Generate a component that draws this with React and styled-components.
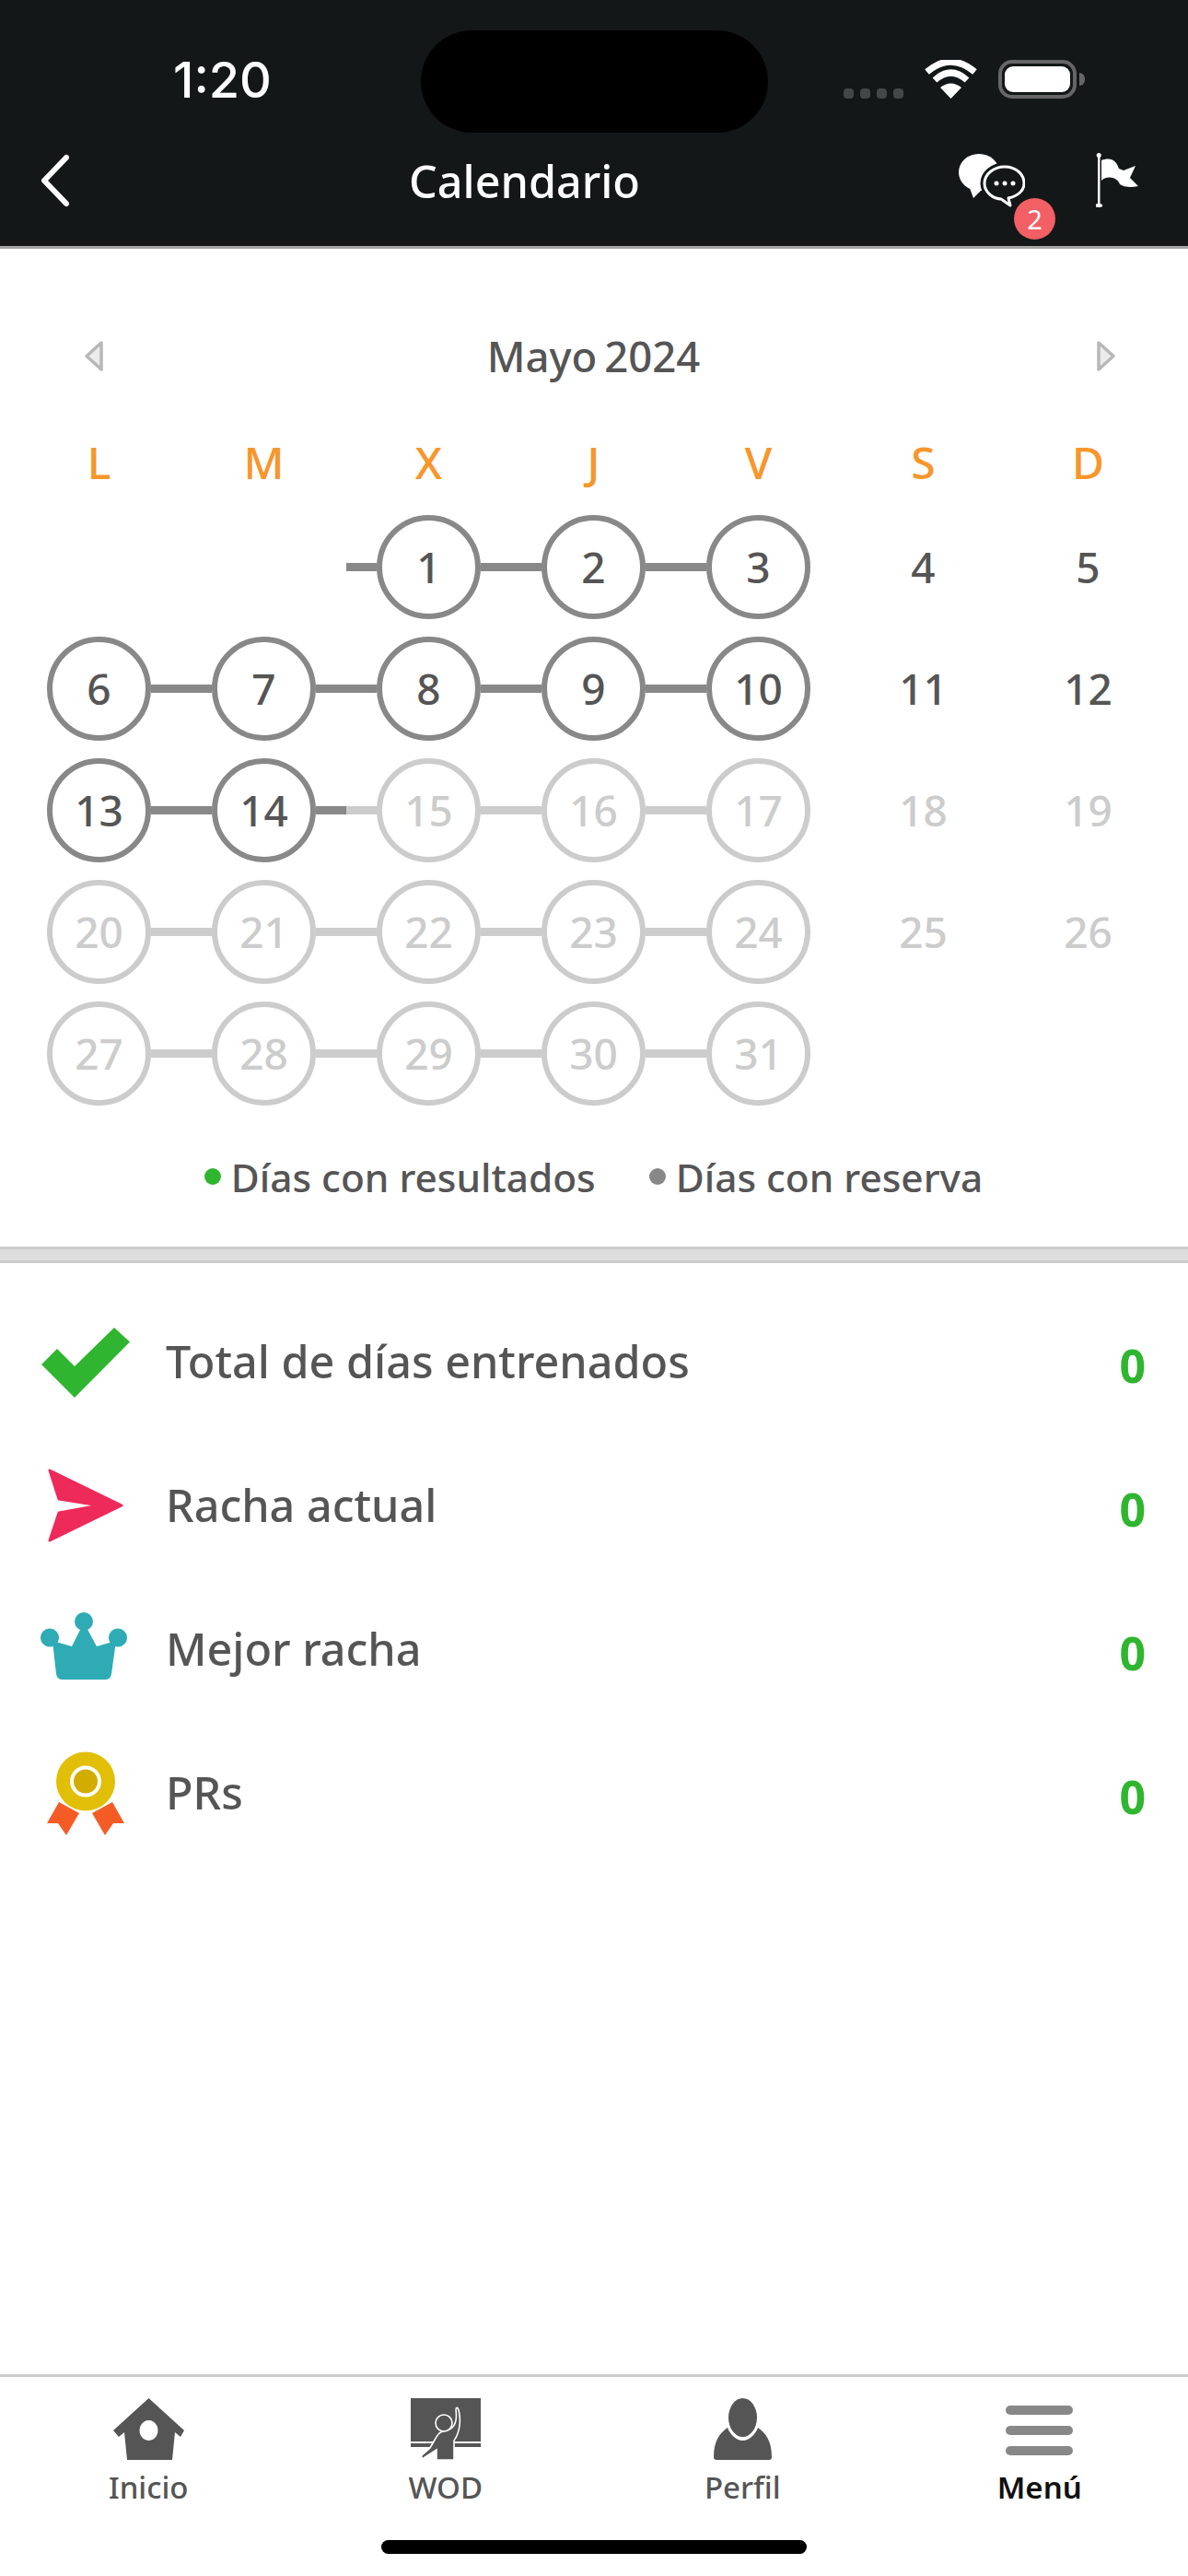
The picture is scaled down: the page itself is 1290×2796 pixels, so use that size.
import React from 'react';
import styled, { createGlobalStyle } from 'styled-components';

const GlobalStyle = createGlobalStyle`
  html, body {
    margin: 0;
    padding: 0;
    background: #fff;
    font-family: "Noto Sans", "Open Sans", sans-serif;
  }
`;

const Page = styled.div`
  position: relative;
  width: 1290px;
  height: 2796px;
  display: flex;
  flex-direction: column;
  overflow: hidden;
  background: #fff;
`;

const Header = styled.header`
  height: 267px;
  background: #131718;
  border-bottom: 3px solid #a3a4a4;
  color: #fff;
`;

const StatusBar = styled.div`
  height: 150px;
  box-sizing: border-box;
  padding-top: 33px;
  display: grid;
  grid-template-columns: 457px 377px 1fr;
`;

const Time = styled.div`
  padding-left: 188px;
  font-family: Inter, "Liberation Sans", sans-serif;
  font-size: 54px;
  font-weight: 500;
  line-height: 108px;
`;

const Island = styled.div`
  height: 111px;
  border-radius: 56px;
  background: #000;
`;

const StatusIcons = styled.div`
  height: 42px;
  margin-top: 32px;
  padding-left: 82px;
  display: flex;
  align-items: flex-end;
`;

const SignalDots = styled.div`
  display: flex;
  gap: 7px;
  width: 65px;
  margin-right: 23px;
`;

const SignalDot = styled.span`
  width: 11px;
  height: 11px;
  border-radius: 4px;
  background: #444748;
`;

const Battery = styled.div`
  width: 85px;
  height: 42px;
  box-sizing: border-box;
  margin-left: 23px;
  padding: 3px;
  border: 4px solid #666;
  border-radius: 15px;
`;

const BatteryFill = styled.div`
  height: 100%;
  border-radius: 9px;
  background: #fff;
`;

const BatteryNub = styled.div`
  width: 6px;
  height: 14px;
  margin: 0 0 14px 3px;
  border-radius: 0 7px 7px 0;
  background: #666;
`;

const NavRow = styled.div`
  height: 117px;
  box-sizing: border-box;
  padding-bottom: 26px;
  display: grid;
  grid-template-columns: 444px 250px 1fr;
  align-items: center;
`;

const BackButton = styled.div`
  padding-left: 43px;
  line-height: 0;
`;

const Title = styled.h1`
  margin: 0;
  text-align: center;
  white-space: nowrap;
  font-size: 48.5px;
  font-weight: 500;
  line-height: 90px;
`;

const NavActions = styled.div`
  padding: 0 0 0 347px;
  display: flex;
  align-items: center;
  gap: 77px;
`;

const ChatButton = styled.div`
  position: relative;
  width: 72px;
  height: 58px;
  line-height: 0;
`;

const Badge = styled.span`
  position: absolute;
  left: 60px;
  top: 48px;
  width: 45px;
  height: 45px;
  border-radius: 50%;
  background: #f25f64;
  color: #fff;
  font-size: 29px;
  line-height: 45px;
  text-align: center;
`;

const FlagButton = styled.div`
  width: 47px;
  height: 59px;
  line-height: 0;
`;

const CalendarSection = styled.section`
  padding: 86px 19px 44px 18px;
`;

const MonthRow = styled.div`
  height: 60px;
  display: grid;
  grid-template-columns: 1fr auto 1fr;
  align-items: center;
`;

const ArrowSlot = styled.div`
  display: flex;
  justify-content: ${(p) => (p.$right ? 'flex-end' : 'flex-start')};
  padding: ${(p) => (p.$right ? '0 60px 0 0' : '0 0 0 74px')};
  line-height: 0;
`;

const MonthTitle = styled.h2`
  margin: 0;
  color: #555;
  font-size: 45.5px;
  font-weight: 500;
  word-spacing: -4px;
  line-height: 60px;
`;

const WeekRow = styled.div`
  margin-top: 56px;
  display: grid;
  grid-template-columns: repeat(7, 179px);
`;

const WeekDay = styled.div`
  color: #f7962b;
  font-size: 48px;
  font-weight: 500;
  line-height: 60px;
  text-align: center;
`;

const DaysGrid = styled.div`
  margin-top: 17px;
  display: grid;
  grid-template-columns: repeat(7, 179px);
  grid-auto-rows: 132px;
`;

const DayCell = styled.div`
  display: flex;
  align-items: center;
`;

const Link = styled.span`
  flex: 1;
  height: 9px;
  background: ${(p) => (p.$hidden ? 'transparent' : p.$past ? '#888' : '#ccc')};
`;

const DayCircle = styled.div`
  width: 113px;
  height: 113px;
  box-sizing: border-box;
  flex: none;
  display: flex;
  align-items: center;
  justify-content: center;
  border-radius: 50%;
  border: ${(p) => (p.$plain ? 'none' : `6px solid ${p.$past ? '#888' : '#ccc'}`)};
  color: ${(p) => (p.$past ? '#555' : '#ccc')};
  font-size: 46px;
  font-weight: 500;
`;

const Legend = styled.div`
  margin-top: 38px;
  height: 60px;
  display: flex;
  align-items: center;
  justify-content: center;
  gap: 58px;
`;

const LegendItem = styled.div`
  display: flex;
  align-items: center;
  gap: 11px;
  color: #555;
  font-size: 42.4px;
  font-weight: 500;
`;

const LegendDot = styled.span`
  width: 18px;
  height: 18px;
  border-radius: 50%;
  background: ${(p) => p.$color};
`;

const Divider = styled.div`
  height: 12px;
  margin-top: 2px;
  background: #ddd;
  border-top: 3px solid #ccc;
  border-bottom: 3px solid #ccc;
`;

const StatsList = styled.section`
  flex: 1;
  padding: 28px 46px 0 43px;
`;

const StatRow = styled.div`
  height: 156px;
  display: grid;
  grid-template-columns: 137px 1fr auto;
  align-items: center;
`;

const StatIcon = styled.div`
  width: 100px;
  height: 100px;
  margin-top: 8px;
  line-height: 0;
`;

const StatLabel = styled.span`
  color: #555;
  font-size: 48.5px;
  font-weight: 500;
`;

const StatValue = styled.span`
  padding-top: 9px;
  color: #2fb52f;
  font-size: 50px;
  font-weight: 700;
`;

const TabBar = styled.nav`
  height: 219px;
  box-sizing: border-box;
  border-top: 3px solid #ccc;
  display: grid;
  grid-template-columns: repeat(4, 1fr);
  align-items: start;
`;

const Tab = styled.div`
  padding-top: 21px;
  display: flex;
  flex-direction: column;
  align-items: center;
`;

const TabIcon = styled.div`
  height: 69px;
  display: flex;
  align-items: flex-end;
  line-height: 0;
`;

const TabLabel = styled.span`
  margin-top: 8px;
  color: ${(p) => (p.$active ? '#111' : '#555')};
  font-size: 33px;
  font-weight: ${(p) => (p.$active ? 600 : 500)};
  line-height: 44px;
`;

const MenuBars = styled.div`
  width: 73px;
  height: 54px;
  margin-bottom: 5px;
  display: flex;
  flex-direction: column;
  justify-content: space-between;
`;

const MenuBar = styled.span`
  height: 10px;
  border-radius: 5px;
  background: #888;
`;

const HomeIndicator = styled.div`
  position: absolute;
  left: 414px;
  top: 2757px;
  width: 462px;
  height: 15px;
  border-radius: 8px;
  background: #000;
`;

const ArrowIcon = ({ right }) => (
  <svg width="21" height="33" viewBox="0 0 21 33">
    <path
      d={right ? 'M3 2 L19 16.5 L3 31 Z' : 'M18 2 L2 16.5 L18 31 Z'}
      fill="#ececec"
      stroke="#b8b8b8"
      strokeWidth="3.5"
      strokeLinejoin="round"
    />
  </svg>
);

const CheckIcon = () => (
  <svg width="100" height="100" viewBox="0 0 100 100">
    <path d="M2 50 L19 33 L38 52 L81 10 L98 25.5 L38 86 Z" fill="#2fb52f" />
  </svg>
);

const SendIcon = () => (
  <svg width="100" height="100" viewBox="0 0 100 100">
    <path
      d="M11 9 L89 47 L11 85 L21 55 L65 47 L21 40 Z"
      fill="#ee2a5b"
      stroke="#ee2a5b"
      strokeWidth="3"
      strokeLinejoin="round"
    />
  </svg>
);

const CrownIcon = () => (
  <svg width="100" height="100" viewBox="0 0 100 100" fill="#2eabb5">
    <circle cx="48" cy="17" r="10" />
    <circle cx="11" cy="34.5" r="10" />
    <circle cx="85" cy="34.5" r="10" />
    <path d="M14 38 L35 44 L48 18 L62 44 L83 38 L78 74 Q77 80 71 80 H25 Q19 80 18 74 Z" />
  </svg>
);

const MedalIcon = () => (
  <svg width="100" height="100" viewBox="0 0 100 100">
    <path d="M21 57 L43 69 L29 93 L20 80 L8 80 Z" fill="#f55c25" />
    <path d="M79 57 L57 69 L71 93 L80 80 L92 80 Z" fill="#f55c25" />
    <circle cx="50" cy="34.5" r="32" fill="#e2bf07" />
    <circle cx="50" cy="34.5" r="15" fill="#d2ad00" stroke="#fff" strokeWidth="4" />
  </svg>
);

const HomeIcon = () => (
  <svg width="77" height="67" viewBox="0 0 77 67">
    <path
      fillRule="evenodd"
      fill="#555"
      d="M38.5 0 L77 35 L73 42 L67 37 L64 67 H15 L12 37 L6 42 L0 35 Z M38.5 24 a10 11 0 1 0 0.01 0 Z"
    />
  </svg>
);

const WodIcon = () => (
  <svg width="76" height="67" viewBox="0 0 76 67">
    <rect width="76" height="47" fill="#555" />
    <rect y="49" width="76" height="4" fill="#555" />
    <path
      d="M47 67 V46 C53 38 55 24 52 13 C51 9 49 10 49 13 C50 20 49 28 45 32 C41 36 35 35 31 38 C27 42 24 50 20 55 L12 62 C11 65 13 66 14 65 L28 56 V67 Z"
      fill="#555"
      stroke="#fff"
      strokeWidth="1.6"
    />
    <circle cx="36" cy="27" r="9" fill="#555" stroke="#fff" strokeWidth="1.6" />
  </svg>
);

const ProfileIcon = () => (
  <svg width="63" height="67" viewBox="0 0 63 67" fill="#555">
    <ellipse cx="31.5" cy="21" rx="15.5" ry="21" />
    <path d="M0 64 C0 47 6 38 15 32 C18 40 25 46 31.5 46 C38 46 45 40 48 32 C57 38 63 47 63 64 Q63 67 60 67 H3 Q0 67 0 64 Z" />
  </svg>
);

const BackIcon = () => (
  <svg width="33" height="58" viewBox="0 0 33 58">
    <path d="M29 4 L5 29 L29 54" fill="none" stroke="#fff" strokeWidth="6" strokeLinecap="round" strokeLinejoin="round" />
  </svg>
);

const WifiIcon = () => (
  <svg width="57" height="42" viewBox="0 0 57 42">
    <path d="M28.5 42 L17 30 Q28.5 21 40 30 Z" fill="#fff" />
    <path d="M11 22 Q28.5 6 46 22" fill="none" stroke="#fff" strokeWidth="7" />
    <path d="M2.5 13 Q28.5 -9 54.5 13" fill="none" stroke="#fff" strokeWidth="7" />
  </svg>
);

const ChatIcon = () => (
  <svg width="72" height="58" viewBox="0 0 72 58">
    <ellipse cx="22" cy="20" rx="22" ry="20" fill="#fff" />
    <path d="M10 32 L16 48 L26 38 Z" fill="#fff" />
    <path
      d="M50 14 C38 14 28 22 28 32 C28 42 38 49 46 49 L56 56 L54 48 C64 46 71 40 71 32 C71 22 62 14 50 14 Z"
      fill="#131718"
      stroke="#131718"
      strokeWidth="9"
    />
    <path
      d="M50 14 C38 14 28 22 28 32 C28 42 38 49 46 49 L56 56 L54 48 C64 46 71 40 71 32 C71 22 62 14 50 14 Z"
      fill="#131718"
      stroke="#fff"
      strokeWidth="3"
      strokeLinejoin="round"
    />
    <circle cx="41" cy="32" r="2.5" fill="#fff" />
    <circle cx="50" cy="32" r="2.5" fill="#fff" />
    <circle cx="59" cy="32" r="2.5" fill="#fff" />
  </svg>
);

const FlagIcon = () => (
  <svg width="47" height="59" viewBox="0 0 47 59" fill="#fff">
    <rect x="2" y="1" width="2.5" height="57" />
    <circle cx="3.2" cy="2.5" r="2.5" />
    <ellipse cx="3.2" cy="57" rx="4" ry="2" />
    <path d="M6 8 C16 4 22 8 25 17 L30 19 L43 14 L37 27 L46 36 C38 38 30 37 26 34 C24 28 14 23 6 30 Z" />
  </svg>
);

const WEEK_DAYS = ['L', 'M', 'X', 'J', 'V', 'S', 'D'];

// null = empty cell, dias 1 a 14 ya pasados
const CALENDAR = [
  null, null, 1, 2, 3, 4, 5,
  6, 7, 8, 9, 10, 11, 12,
  13, 14, 15, 16, 17, 18, 19,
  20, 21, 22, 23, 24, 25, 26,
  27, 28, 29, 30, 31, null, null,
];

const STATS = [
  { label: 'Total de días entrenados', icon: <CheckIcon /> },
  { label: 'Racha actual', icon: <SendIcon /> },
  { label: 'Mejor racha', icon: <CrownIcon /> },
  { label: 'PRs', icon: <MedalIcon /> },
];

const Day = ({ day, index }) => {
  if (day === null) return <DayCell />;
  const column = index % 7;
  const past = day <= 14;
  const weekend = column > 4;
  return (
    <DayCell>
      <Link $past={past} $hidden={weekend || column === 0} />
      <DayCircle $past={past} $plain={weekend}>{day}</DayCircle>
      <Link $past={past} $hidden={weekend || column === 4} />
    </DayCell>
  );
};

const App = () => {
  return (
    <Page>
      <GlobalStyle />
      <Header>
        <StatusBar>
          <Time>1:20</Time>
          <Island />
          <StatusIcons>
            <SignalDots>
              <SignalDot />
              <SignalDot />
              <SignalDot />
              <SignalDot />
            </SignalDots>
            <WifiIcon />
            <Battery>
              <BatteryFill />
            </Battery>
            <BatteryNub />
          </StatusIcons>
        </StatusBar>
        <NavRow>
          <BackButton>
            <BackIcon />
          </BackButton>
          <Title>Calendario</Title>
          <NavActions>
            <ChatButton>
              <ChatIcon />
              <Badge>2</Badge>
            </ChatButton>
            <FlagButton>
              <FlagIcon />
            </FlagButton>
          </NavActions>
        </NavRow>
      </Header>

      <CalendarSection>
        <MonthRow>
          <ArrowSlot>
            <ArrowIcon />
          </ArrowSlot>
          <MonthTitle>Mayo 2024</MonthTitle>
          <ArrowSlot $right>
            <ArrowIcon right />
          </ArrowSlot>
        </MonthRow>
        <WeekRow>
          {WEEK_DAYS.map((d) => (
            <WeekDay key={d}>{d}</WeekDay>
          ))}
        </WeekRow>
        <DaysGrid>
          {CALENDAR.map((day, i) => (
            <Day key={i} day={day} index={i} />
          ))}
        </DaysGrid>
        <Legend>
          <LegendItem>
            <LegendDot $color="#2fb52f" />
            Días con resultados
          </LegendItem>
          <LegendItem>
            <LegendDot $color="#888" />
            Días con reserva
          </LegendItem>
        </Legend>
      </CalendarSection>
      <Divider />

      <StatsList>
        {STATS.map((s) => (
          <StatRow key={s.label}>
            <StatIcon>{s.icon}</StatIcon>
            <StatLabel>{s.label}</StatLabel>
            <StatValue>0</StatValue>
          </StatRow>
        ))}
      </StatsList>

      <TabBar>
        <Tab>
          <TabIcon><HomeIcon /></TabIcon>
          <TabLabel>Inicio</TabLabel>
        </Tab>
        <Tab>
          <TabIcon><WodIcon /></TabIcon>
          <TabLabel>WOD</TabLabel>
        </Tab>
        <Tab>
          <TabIcon><ProfileIcon /></TabIcon>
          <TabLabel>Perfil</TabLabel>
        </Tab>
        <Tab>
          <TabIcon>
            <MenuBars>
              <MenuBar />
              <MenuBar />
              <MenuBar />
            </MenuBars>
          </TabIcon>
          <TabLabel $active>Menú</TabLabel>
        </Tab>
      </TabBar>
      <HomeIndicator />
    </Page>
  );
};

export default App;
